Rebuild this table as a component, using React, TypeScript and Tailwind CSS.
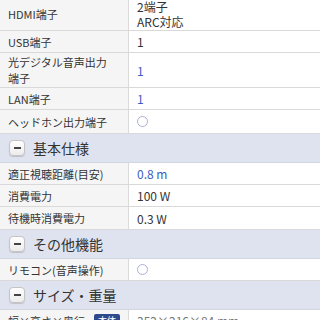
import React from "react";

const font = { fontFamily: '"Noto Sans CJK JP", "Noto Sans", sans-serif' };

function Row({ label, children, h = "h-[22px]" }: { label: React.ReactNode; children?: React.ReactNode; h?: string }) {
  return (
    <div className={`flex ${h} border-b border-[#d9d9d9]`}>
      <div className="w-[129px] shrink-0 bg-[#f5f5f5] border-r border-[#dadada] flex items-center pl-[8px] pr-[4px] text-[11px] leading-[16px] text-[#333]">
        {label}
      </div>
      <div className="flex-1 bg-white flex items-center pl-[8px] text-[12px] leading-[15px] text-[#333]">
        {children}
      </div>
    </div>
  );
}

function Header({ title }: { title: string }) {
  return (
    <div className="flex items-center h-[29px] bg-[#dfe3ef] border-b border-[#d3d6e0] pl-[9px]">
      <div className="w-[16px] h-[16px] rounded-[4px] bg-gradient-to-b from-white to-[#ececec] border border-[#c4c4c4] shadow-[0_1px_1px_rgba(0,0,0,0.15)] flex items-center justify-center">
        <div className="w-[7px] h-[2px] bg-[#444]" />
      </div>
      <span className="ml-[8px] text-[14px] text-[#333]">{title}</span>
    </div>
  );
}

function Circle() {
  return <div className="w-[11px] h-[11px] rounded-full border-[1.5px] border-[#aab1d6]" />;
}

export default function App() {
  return (
    <div className="w-[320px] h-[320px] overflow-hidden bg-white" style={font}>
      <div className="-mt-[3px]">
        <Row label="HDMI端子" h="h-[34px]">
          <div className="flex flex-col">
            <span>2端子</span>
            <span>ARC対応</span>
          </div>
        </Row>
        <Row label="USB端子">1</Row>
        <Row label={<span>光デジタル音声出力<br />端子</span>} h="h-[35px]">
          <span className="text-[#3b5cc0]">1</span>
        </Row>
        <Row label="LAN端子">
          <span className="text-[#3b5cc0]">1</span>
        </Row>
        <Row label="ヘッドホン出力端子" h="h-[24px]">
          <Circle />
        </Row>
        <Header title="基本仕様" />
        <Row label="適正視聴距離(目安)">
          <span className="text-[#3b5cc0]">0.8 m</span>
        </Row>
        <Row label="消費電力">100 W</Row>
        <Row label="待機時消費電力" h="h-[23px]">0.3 W</Row>
        <Header title="その他機能" />
        <Row label="リモコン(音声操作)">
          <Circle />
        </Row>
        <Header title="サイズ・重量" />
        <Row label={
          <div className="flex items-center w-full">
            <span>幅×高さ×奥行</span>
            <span className="ml-auto mr-[4px] bg-[#2f4a8c] text-white text-[9px] leading-[14px] px-[4px] rounded-[2px]">本体</span>
          </div>
        }>
          <span className="text-[#777]">352×216×84 mm</span>
        </Row>
      </div>
    </div>
  );
}
